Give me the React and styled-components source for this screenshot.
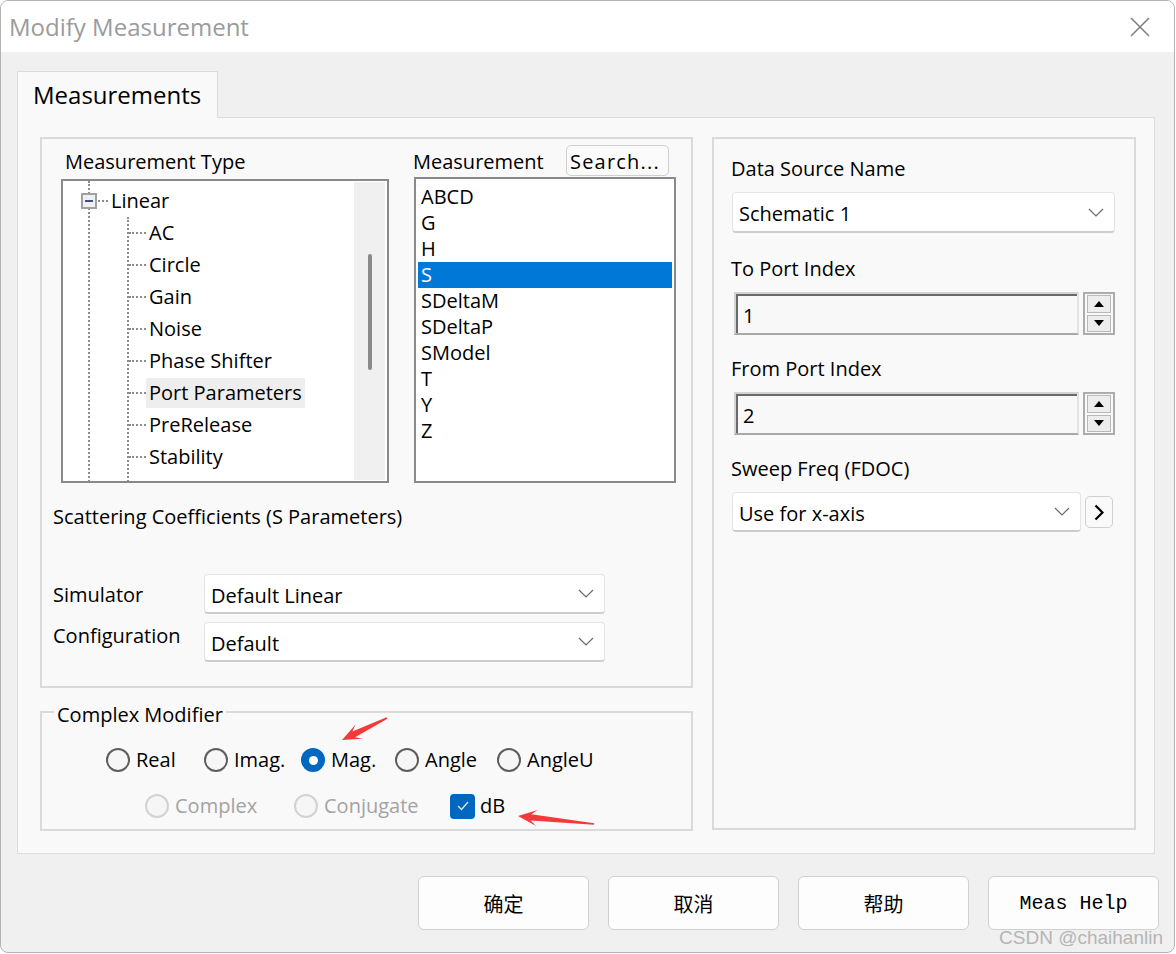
import React from 'react';
import styled, { createGlobalStyle, css } from 'styled-components';

const GlobalStyle = createGlobalStyle`
  html, body { margin: 0; padding: 0; background: #fff; }
  body { font-family: "Open Sans", "Noto Sans CJK SC", sans-serif; color: #000; }
  * { box-sizing: border-box; }
`;

const Window = styled.div`
  position: relative;
  width: 1175px;
  height: 953px;
  border: 1px solid #b4b4b4;
  border-radius: 8px;
  overflow: hidden;
  display: flex;
  flex-direction: column;
  background: #f0f0f0;
`;

const TitleBar = styled.div`
  height: 51px;
  flex: none;
  background: #fff;
  display: flex;
  align-items: center;
  justify-content: space-between;
  padding: 0 24px 0 8px;
`;

const Title = styled.div`
  font-size: 24px;
  line-height: 32px;
  color: #9b9b9b;
`;

const Body = styled.div`
  flex: 1;
  display: flex;
  flex-direction: column;
  padding: 19px 15px 0 16px;
`;

const TabStrip = styled.div`
  display: flex;
`;

const Tab = styled.div`
  position: relative;
  z-index: 1;
  width: 201px;
  height: 47px;
  margin-bottom: -1px;
  padding-left: 15px;
  background: #f9f9f9;
  border: 1px solid #dcdcdc;
  border-bottom: none;
  font-size: 24px;
  line-height: 46px;
`;

const Panel = styled.div`
  width: 1138px;
  height: 737px;
  border: 1px solid #dcdcdc;
  background: #f9f9f9;
  display: flex;
  gap: 19px;
  padding: 19px 0 0 22px;
`;

const LeftCol = styled.div`
  width: 653px;
  display: flex;
  flex-direction: column;
`;

const Group = styled.div`
  flex: none;
  width: ${p => p.$w}px;
  height: ${p => p.$h}px;
  border: 2px solid #dadada;
  display: flex;
  flex-direction: column;
`;

const LeftGroup = styled(Group)`
  padding: 4px 0 0 11px;
`;

const RightGroup = styled(Group)`
  padding: 14px 0 0 18px;
`;

const TopGrid = styled.div`
  margin-left: 8px;
  display: grid;
  grid-template-columns: 328px 262px;
  grid-template-rows: 34px auto;
  column-gap: 25px;
`;

const Caption = styled.div`
  font-size: 20px;
  line-height: 28px;
  padding-top: ${p => p.$dy || 0}px;
  white-space: nowrap;
  margin-left: ${p => p.$indent || 0}px;
`;

const MeasHeader = styled.div`
  display: flex;
  align-items: center;
  justify-content: space-between;
  padding-right: 7px;
`;

const SearchButton = styled.div`
  width: 103px;
  height: 31px;
  border: 1px solid #cfcfcf;
  border-radius: 5px;
  background: #fbfbfb;
  font-size: 20px;
  letter-spacing: 1.2px;
  line-height: 28px;
  padding: 2px 0 0 3px;
  margin-top: 1px;
  white-space: nowrap;
  overflow: hidden;
`;

const TreeBox = styled.div`
  height: 304px;
  margin-top: 2px;
  border: 2px solid #8a8a8a;
  background: #fff;
  display: flex;
`;

const TreeContent = styled.div`
  flex: 1;
  overflow: hidden;
`;

const RootGroup = styled.div`
  margin-left: 25px;
  padding-top: 4px;
  min-height: 100%;
  border-left: 2px dotted #8c8c8c;
`;

const TreeRow = styled.div`
  height: 32px;
  display: flex;
  align-items: center;
  font-size: 20px;
`;

const Expander = styled.span`
  width: 16px;
  height: 16px;
  margin-left: -9px;
  border: 2px solid #a0a0a0;
  background: #f0f0f0;
  display: grid;
  place-items: center;
  &::after {
    content: '';
    width: 8px;
    height: 2px;
    background: #35508a;
  }
`;

const Connector = styled.span`
  width: ${p => p.$w}px;
  margin-left: ${p => p.$ml || 0}px;
  height: 0;
  border-top: 2px dotted #8c8c8c;
`;

const ChildGroup = styled.div`
  margin-left: 37px;
  border-left: 2px dotted #8c8c8c;
  min-height: 300px;
`;

const TreeLabel = styled.span`
  height: 30px;
  line-height: 30px;
  padding: 0 3px;
  white-space: nowrap;
  ${p => p.$selected && css`
    background: #eeeeee;
  `}
`;

const ScrollTrack = styled.div`
  width: 31px;
  margin: 1px 2px 1px 0;
  background: #f0f0f0;
  padding: 72px 0 0 14px;
`;

const Thumb = styled.div`
  width: 4px;
  height: 116px;
  border-radius: 2px;
  background: #8a8a8a;
`;

const ListBox = styled.div`
  height: 306px;
  border: 2px solid #8a8a8a;
  background: #fff;
  padding: 5px 2px 0;
`;

const ListItem = styled.div`
  height: 26px;
  line-height: 26px;
  padding-left: 3px;
  font-size: 20px;
  ${p => p.$selected && css`
    background: #0078d7;
    color: #fff;
  `}
`;

const ScatterCaption = styled(Caption)`
  margin-top: 20px;
`;

const FormRow = styled.div`
  display: flex;
  margin-top: ${p => p.$mt}px;
`;

const FormLabel = styled.div`
  width: 151px;
  font-size: 20px;
  line-height: 28px;
  margin-top: ${p => p.$mt}px;
`;

const Select = styled.div`
  width: ${p => p.$w}px;
  height: ${p => p.$h || 40}px;
  display: flex;
  align-items: center;
  justify-content: space-between;
  padding: 0 10px 0 6px;
  background: #fff;
  border: 1px solid #e4e4e4;
  border-bottom: 2px solid #cdcdcd;
  border-radius: 4px;
  font-size: 20px;
`;

const SelectText = styled.span`
  line-height: 28px;
  padding-top: 4px;
`;

const Fieldset = styled.fieldset`
  flex: none;
  margin: 7px 0 0;
  padding: 0;
  height: 136px;
  border: 2px solid #dadada;
  min-inline-size: 0;
`;

const Legend = styled.legend`
  margin-left: 12px;
  padding: 6px 3px 0;
  font-size: 20px;
  line-height: 28px;
`;

const OptionRow = styled.div`
  display: flex;
  align-items: center;
  height: 28px;
  margin-top: ${p => p.$mt}px;
  padding-left: ${p => p.$pl}px;
`;

const Option = styled.label`
  width: ${p => (p.$w ? `${p.$w}px` : 'auto')};
  display: flex;
  align-items: center;
  font-size: 20px;
  line-height: 28px;
  color: ${p => (p.$disabled ? '#a3a3a3' : '#000')};
`;

const Radio = styled.span`
  flex: none;
  width: 24px;
  height: 24px;
  margin-right: 6px;
  border-radius: 50%;
  border: 2px solid ${p => (p.$disabled ? '#d2d2d2' : '#5e5e5e')};
  background: #f6f6f6;
  display: grid;
  place-items: center;
  ${p => p.$checked && css`
    border-color: #0067c0;
    background: #0067c0;
    &::after {
      content: '';
      width: 9px;
      height: 9px;
      border-radius: 50%;
      background: #fff;
    }
  `}
`;

const Checkbox = styled.span`
  flex: none;
  width: 25px;
  height: 25px;
  margin-right: 5px;
  border-radius: 4px;
  background: #0067c0;
  display: grid;
  place-items: center;
`;

const Field = styled.div`
  height: 100px;
  display: flex;
  flex-direction: column;
`;

const FieldLabel = styled.div`
  height: 30px;
  padding-top: 2px;
  margin: 0 0 9px -1px;
  font-size: 20px;
  line-height: 28px;
`;

const SpinRow = styled.div`
  display: flex;
  gap: 4px;
  width: 381px;
  height: 43px;
  margin-left: 2px;
`;

const SpinInput = styled.div`
  flex: 1;
  display: flex;
  align-items: center;
  padding: 4px 0 0 7px;
  border: 2px solid;
  border-color: #d4d4d4 #e2e2e2 #a8a8a8 #d4d4d4;
  box-shadow: inset 2px 2px 0 #6a6a6a;
  background: #f8f8f8;
  font-size: 20px;
`;

const SpinBox = styled.div`
  width: 32px;
  display: flex;
  flex-direction: column;
  gap: 2px;
  padding: 1px 2px;
  border: 2px solid #acacac;
`;

const SpinButton = styled.div`
  flex: 1;
  display: grid;
  place-items: center;
  border: 1px solid #b8b8b8;
  background: #ededed;
`;

const SweepRow = styled.div`
  display: flex;
  align-items: center;
  gap: 4px;
`;

const ArrowButton = styled.div`
  width: 28px;
  height: 32px;
  display: grid;
  place-items: center;
  border: 1px solid #d0d0d0;
  border-radius: 5px;
  background: #fafafa;
`;

const ButtonRow = styled.div`
  display: flex;
  justify-content: flex-end;
  gap: 19px;
  margin-top: 22px;
`;

const DialogButton = styled.div`
  width: 171px;
  height: 54px;
  display: grid;
  place-items: center;
  border: 1px solid #d0d0d0;
  border-radius: 6px;
  background: #fdfdfd;
  font-size: 20px;
  font-family: ${p => (p.$mono ? '"Liberation Mono", monospace' : '"Noto Sans CJK SC", sans-serif')};
`;

const Watermark = styled.div`
  position: absolute;
  right: 11px;
  bottom: 3px;
  font-family: "Liberation Sans", sans-serif;
  font-size: 19px;
  color: #b5b5b5;
  pointer-events: none;
`;

const Overlay = styled.svg`
  position: absolute;
  left: -1px;
  top: -1px;
  pointer-events: none;
`;

function arrowPoints(tx, ty, hx, hy) {
  const dx = hx - tx;
  const dy = hy - ty;
  const len = Math.hypot(dx, dy);
  const ux = dx / len;
  const uy = dy / len;
  const nx = -uy;
  const ny = ux;
  const at = (d, w) => [hx - ux * d + nx * w, hy - uy * d + ny * w];
  const pts = [
    [tx + nx * 0.8, ty + ny * 0.8],
    at(13, 3.2),
    at(19, 8),
    [hx, hy],
    at(19, -8),
    at(13, -3.2),
    [tx - nx * 0.8, ty - ny * 0.8],
  ];
  return pts.map(p => p.map(v => v.toFixed(1)).join(',')).join(' ');
}

const Chevron = () => (
  <svg width="16" height="9" viewBox="0 0 16 9">
    <polyline points="1,1 8,8 15,1" fill="none" stroke="#6a6a6a" strokeWidth="1.2" />
  </svg>
);

const Triangle = ({ up }) => (
  <svg width="10" height="6" viewBox="0 0 10 6">
    <polygon points={up ? '5,0 10,6 0,6' : '0,0 10,0 5,6'} fill="#000" />
  </svg>
);

const treeItems = ['AC', 'Circle', 'Gain', 'Noise', 'Phase Shifter', 'Port Parameters', 'PreRelease', 'Stability', 'TDR'];
const measItems = ['ABCD', 'G', 'H', 'S', 'SDeltaM', 'SDeltaP', 'SModel', 'T', 'Y', 'Z'];

const Spinner = ({ value }) => (
  <SpinRow>
    <SpinInput>{value}</SpinInput>
    <SpinBox>
      <SpinButton><Triangle up /></SpinButton>
      <SpinButton><Triangle /></SpinButton>
    </SpinBox>
  </SpinRow>
);

const Dropdown = ({ w, h, children }) => (
  <Select $w={w} $h={h}>
    <SelectText>{children}</SelectText>
    <Chevron />
  </Select>
);

export default function App() {
  return (
    <>
      <GlobalStyle />
      <Window>
        <TitleBar>
          <Title>Modify Measurement</Title>
          <svg width="20" height="20" viewBox="0 0 20 20">
            <path d="M1 1 L19 19 M19 1 L1 19" stroke="#7c7c7c" strokeWidth="1.5" />
          </svg>
        </TitleBar>
        <Body>
          <TabStrip>
            <Tab>Measurements</Tab>
          </TabStrip>
          <Panel>
            <LeftCol>
              <LeftGroup $w={653} $h={551}>
                <TopGrid>
                  <Caption $indent={4} $dy={4} style={{ alignSelf: 'center' }}>Measurement Type</Caption>
                  <MeasHeader>
                    <Caption $indent={-1} $dy={4}>Measurement</Caption>
                    <SearchButton>Search...</SearchButton>
                  </MeasHeader>
                  <TreeBox>
                    <TreeContent>
                      <RootGroup>
                        <TreeRow>
                          <Expander />
                          <Connector $w={10} $ml={1} />
                          <TreeLabel>Linear</TreeLabel>
                        </TreeRow>
                        <ChildGroup>
                          {treeItems.map(item => (
                            <TreeRow key={item}>
                              <Connector $w={17} />
                              <TreeLabel $selected={item === 'Port Parameters'}>{item}</TreeLabel>
                            </TreeRow>
                          ))}
                        </ChildGroup>
                      </RootGroup>
                    </TreeContent>
                    <ScrollTrack>
                      <Thumb />
                    </ScrollTrack>
                  </TreeBox>
                  <ListBox>
                    {measItems.map(item => (
                      <ListItem key={item} $selected={item === 'S'}>{item}</ListItem>
                    ))}
                  </ListBox>
                </TopGrid>
                <ScatterCaption>Scattering Coefficients (S Parameters)</ScatterCaption>
                <FormRow $mt={43}>
                  <FormLabel $mt={7}>Simulator</FormLabel>
                  <Dropdown w={401}>Default Linear</Dropdown>
                </FormRow>
                <FormRow $mt={8}>
                  <FormLabel $mt={0}>Configuration</FormLabel>
                  <Dropdown w={401}>Default</Dropdown>
                </FormRow>
              </LeftGroup>
              <Fieldset>
                <Legend>Complex Modifier</Legend>
                <OptionRow $mt={17} $pl={64}>
                  <Option $w={98}><Radio />Real</Option>
                  <Option $w={97}><Radio />Imag.</Option>
                  <Option $w={94}><Radio $checked />Mag.</Option>
                  <Option $w={102}><Radio />Angle</Option>
                  <Option><Radio />AngleU</Option>
                </OptionRow>
                <OptionRow $mt={18} $pl={103}>
                  <Option $w={149} $disabled><Radio $disabled />Complex</Option>
                  <Option $w={156} $disabled><Radio $disabled />Conjugate</Option>
                  <Option>
                    <Checkbox>
                      <svg width="12" height="10" viewBox="0 0 12 10">
                        <polyline points="1,5 4.5,8.5 11,1" fill="none" stroke="#d6e6f8" strokeWidth="1.4" />
                      </svg>
                    </Checkbox>
                    dB
                  </Option>
                </OptionRow>
              </Fieldset>
            </LeftCol>
            <RightGroup $w={424} $h={693}>
              <Field>
                <FieldLabel>Data Source Name</FieldLabel>
                <Dropdown w={383} h={41}>Schematic 1</Dropdown>
              </Field>
              <Field>
                <FieldLabel>To Port Index</FieldLabel>
                <Spinner value="1" />
              </Field>
              <Field>
                <FieldLabel>From Port Index</FieldLabel>
                <Spinner value="2" />
              </Field>
              <Field>
                <FieldLabel>Sweep Freq (FDOC)</FieldLabel>
                <SweepRow>
                  <Dropdown w={349}>Use for x-axis</Dropdown>
                  <ArrowButton>
                    <svg width="10" height="17" viewBox="0 0 10 17">
                      <polyline points="1.5,1.5 8.5,8.5 1.5,15.5" fill="none" stroke="#000" strokeWidth="2.2" />
                    </svg>
                  </ArrowButton>
                </SweepRow>
              </Field>
            </RightGroup>
          </Panel>
          <ButtonRow>
            <DialogButton>确定</DialogButton>
            <DialogButton>取消</DialogButton>
            <DialogButton>帮助</DialogButton>
            <DialogButton $mono>Meas Help</DialogButton>
          </ButtonRow>
        </Body>
        <Watermark>CSDN @chaihanlin</Watermark>
        <Overlay width="1176" height="954" viewBox="0 0 1176 954">
          <polygon points={arrowPoints(387, 718, 342, 740)} fill="#f23a3a" />
          <polygon points={arrowPoints(594, 824, 518, 816)} fill="#f23a3a" />
        </Overlay>
      </Window>
    </>
  );
}
